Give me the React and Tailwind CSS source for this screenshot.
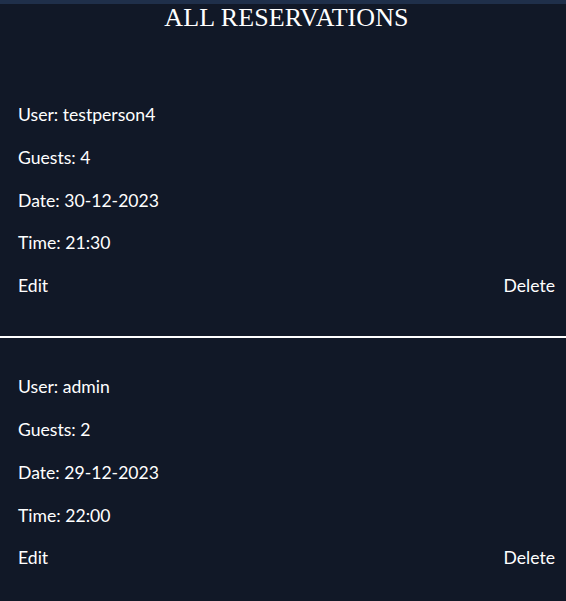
import React from "react";

const reservations = [
  { user: "testperson4", guests: 4, date: "30-12-2023", time: "21:30" },
  { user: "admin", guests: 2, date: "29-12-2023", time: "22:00" },
];

function ReservationCard({ r, last }) {
  return (
    <div className={`pl-[18px] pr-[11px] pt-[36px] pb-[37px] ${last ? "" : "border-b-2 border-white"}`}>
      <div className="flex flex-col gap-[16.5px] text-[17.6px] leading-[26.25px]">
        <p>User: {r.user}</p>
        <p>Guests: {r.guests}</p>
        <p>Date: {r.date}</p>
        <p>Time: {r.time}</p>
        <div className="flex justify-between">
          <button>Edit</button>
          <button>Delete</button>
        </div>
      </div>
    </div>
  );
}

export default function App() {
  return (
    <div className="min-h-screen bg-[#111827] text-white font-['Lato',sans-serif]">
      <div className="h-[4px] bg-[#1f2f4a]" />
      <h1 className="pl-[7px] text-center font-['Liberation_Serif',serif] text-[26px] leading-[28px] tracking-[0.1px]">
        ALL RESERVATIONS
      </h1>
      <div className="mt-[34px]">
        {reservations.map((r, i) => (
          <ReservationCard key={i} r={r} last={i === reservations.length - 1} />
        ))}
      </div>
    </div>
  );
}
